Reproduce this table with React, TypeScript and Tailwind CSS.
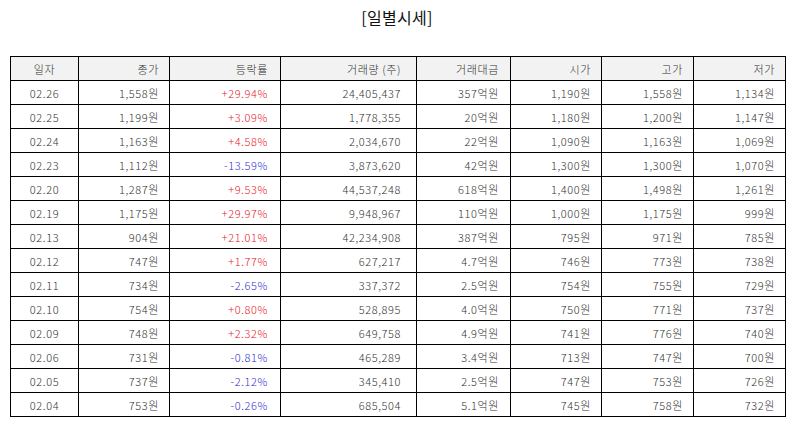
import React from "react";

const rows: string[][] = [
  ["02.26", "1,558원", "+29.94%", "24,405,437", "357억원", "1,190원", "1,558원", "1,134원"],
  ["02.25", "1,199원", "+3.09%", "1,778,355", "20억원", "1,180원", "1,200원", "1,147원"],
  ["02.24", "1,163원", "+4.58%", "2,034,670", "22억원", "1,090원", "1,163원", "1,069원"],
  ["02.23", "1,112원", "-13.59%", "3,873,620", "42억원", "1,300원", "1,300원", "1,070원"],
  ["02.20", "1,287원", "+9.53%", "44,537,248", "618억원", "1,400원", "1,498원", "1,261원"],
  ["02.19", "1,175원", "+29.97%", "9,948,967", "110억원", "1,000원", "1,175원", "999원"],
  ["02.13", "904원", "+21.01%", "42,234,908", "387억원", "795원", "971원", "785원"],
  ["02.12", "747원", "+1.77%", "627,217", "4.7억원", "746원", "773원", "738원"],
  ["02.11", "734원", "-2.65%", "337,372", "2.5억원", "754원", "755원", "729원"],
  ["02.10", "754원", "+0.80%", "528,895", "4.0억원", "750원", "771원", "737원"],
  ["02.09", "748원", "+2.32%", "649,758", "4.9억원", "741원", "776원", "740원"],
  ["02.06", "731원", "-0.81%", "465,289", "3.4억원", "713원", "747원", "700원"],
  ["02.05", "737원", "-2.12%", "345,410", "2.5억원", "747원", "753원", "726원"],
  ["02.04", "753원", "-0.26%", "685,504", "5.1억원", "745원", "758원", "732원"],
];

const headers = ["일자", "종가", "등락률", "거래량 (주)", "거래대금", "시가", "고가", "저가"];
const widths = ["w-[68px]", "w-[91px]", "w-[111px]", "w-[136px]", "w-[94px]", "w-[91px]", "w-[92px]", "w-[92px]"];
const pads = ["", "pr-[10px]", "pr-[12px]", "pr-[15px]", "pr-[11px]", "pr-[10px]", "pr-[10px]", "pr-[10px]"];

export default function App() {
  return (
    <div
      className="w-[794px] h-[425px] bg-white text-[#333] overflow-hidden"
      style={{ fontFamily: '"Noto Sans CJK KR", "Noto Sans", sans-serif' }}
    >
      <div className="h-[56px] pt-[4px] text-center text-[16px] leading-[26px] text-[#111] font-normal tracking-[0.3px]">
        [일별시세]
      </div>
      <table className="ml-[10px] w-[775px] table-fixed border-collapse text-[11px] font-light tracking-[0.6px]">
        <colgroup>
          {widths.map((w, i) => (
            <col key={i} className={w} />
          ))}
        </colgroup>
        <thead>
          <tr className="h-[24px] bg-[#f2f2f2]">
            {headers.map((h, i) => (
              <th
                key={i}
                className={`border border-black font-light p-0 leading-[22px] ${
                  i === 0 ? "text-center" : `text-right ${pads[i]}`
                }`}
              >
                {h}
              </th>
            ))}
          </tr>
        </thead>
        <tbody>
          {rows.map((r, ri) => (
            <tr key={ri} className="h-[24px]">
              {r.map((c, ci) => {
                let color = "";
                if (ci === 2) color = c.startsWith("+") ? "text-[#e8202a]" : "text-[#3030d0]";
                return (
                  <td
                    key={ci}
                    className={`border border-black p-0 leading-[22px] ${
                      ci === 0 ? "text-center" : `text-right ${pads[ci]}`
                    } ${color}`}
                  >
                    {c}
                  </td>
                );
              })}
            </tr>
          ))}
        </tbody>
      </table>
    </div>
  );
}
